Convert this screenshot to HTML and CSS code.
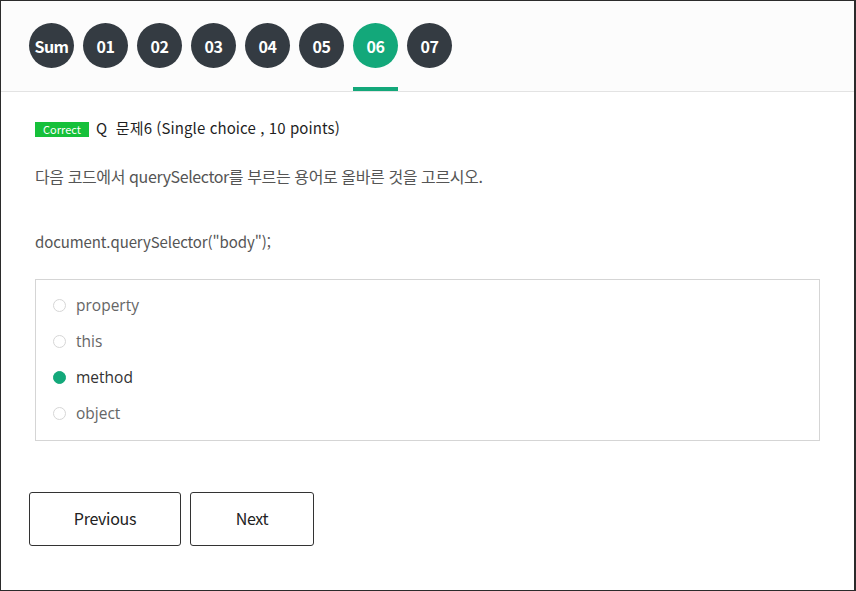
FILE: index.html
```html
<!DOCTYPE html>
<html lang="ko">
<head>
<meta charset="utf-8">
<link rel="stylesheet" href="styles.css">
</head>
<body>
<div class="frame">
  <div class="header">
    <div class="tabs">
      <div class="tab"><span class="dot">Sum</span></div>
      <div class="tab"><span class="dot">01</span></div>
      <div class="tab"><span class="dot">02</span></div>
      <div class="tab"><span class="dot">03</span></div>
      <div class="tab"><span class="dot">04</span></div>
      <div class="tab"><span class="dot">05</span></div>
      <div class="tab active"><span class="dot">06</span></div>
      <div class="tab"><span class="dot">07</span></div>
    </div>
  </div>
  <div class="content">
    <div class="qtitle"><span class="badge">Correct</span><span class="qtext">Q&nbsp; 문제6 (Single choice , 10 points)</span></div>
    <p class="desc">다음 코드에서 querySelector를 부르는 용어로 올바른 것을 고르시오.</p>
    <p class="code">document.querySelector("body");</p>
    <div class="options">
      <div class="opt"><span class="radio"></span><span>property</span></div>
      <div class="opt"><span class="radio"></span><span>this</span></div>
      <div class="opt selected"><span class="radio"></span><span>method</span></div>
      <div class="opt"><span class="radio"></span><span>object</span></div>
    </div>
    <div class="nav">
      <button class="btn prev">Previous</button>
      <button class="btn next">Next</button>
    </div>
  </div>
</div>
</body>
</html>
```
FILE: styles.css
```css
* { box-sizing: border-box; }
html, body { margin: 0; padding: 0; }
body {
  width: 856px;
  height: 591px;
  background: #fff;
  font-family: "Noto Sans CJK KR", "Liberation Sans", sans-serif;
}
.frame {
  width: 856px;
  height: 591px;
  border: 1px solid #2b2b2b;
  border-right-width: 2px;
  overflow: hidden;
}
.header {
  background: #fcfcfc;
  border-bottom: 1px solid #e3e3e3;
  height: 91px;
  padding: 22px 0 0 28px;
}
.tabs {
  display: flex;
  gap: 9px;
}
.tab {
  width: 45px;
  height: 68px;
  border-bottom: 4px solid transparent;
}
.tab.active { border-bottom-color: #13a87a; }
.dot {
  display: flex;
  align-items: center;
  justify-content: center;
  width: 45px;
  height: 45px;
  border-radius: 50%;
  background: #343b42;
  color: #fff;
  font-weight: 700;
  font-size: 16px;
  letter-spacing: -0.5px;
}
.tab.active .dot { background: #13a87a; }
.content {
  padding: 0 34px 0 34px;
}
.qtitle {
  display: flex;
  align-items: center;
  margin-top: 24px;
  height: 22px;
}
.badge {
  display: inline-flex;
  align-items: center;
  justify-content: center;
  width: 54px;
  height: 15px;
  background: #16c03a;
  color: #fff;
  font-size: 11px;
  margin-top: 5px;
  margin-right: 7px;
  line-height: 1;
}
.qtext {
  font-size: 15px;
  font-weight: 400;
  color: #1f1f1f;
  letter-spacing: 0.1px;
}
.desc {
  margin: 27px 0 0;
  font-size: 16px;
  color: #555;
  line-height: 22px;
  letter-spacing: -0.4px;
}
.code {
  margin: 44px 0 0;
  font-size: 15px;
  color: #555;
  line-height: 22px;
  letter-spacing: -0.1px;
}
.options {
  margin-top: 26px;
  border: 1px solid #d5d5d5;
  height: 162px;
  padding: 7px 0 0 17px;
}
.opt {
  display: flex;
  align-items: center;
  height: 36px;
  font-family: "Open Sans", "Noto Sans CJK KR", sans-serif;
  font-size: 15.5px;
  color: #666;
}
.radio {
  width: 13px;
  height: 13px;
  border-radius: 50%;
  border: 1px solid #d6d6d6;
  margin-right: 10px;
  background: #fff;
}
.opt.selected { color: #333; }
.opt.selected .radio { background: #13a87a; border-color: #13a87a; }
.nav {
  display: flex;
  gap: 9px;
  margin: 51px 0 0 -6px;
}
.btn {
  height: 54px;
  border: 1px solid #333;
  border-radius: 3px;
  background: #fff;
  font-family: "Noto Sans CJK KR", "Liberation Sans", sans-serif;
  font-size: 16px;
  color: #222;
  letter-spacing: -0.3px;
  padding: 0 0 3px;
}
.prev { width: 152px; }
.next { width: 124px; }
```
